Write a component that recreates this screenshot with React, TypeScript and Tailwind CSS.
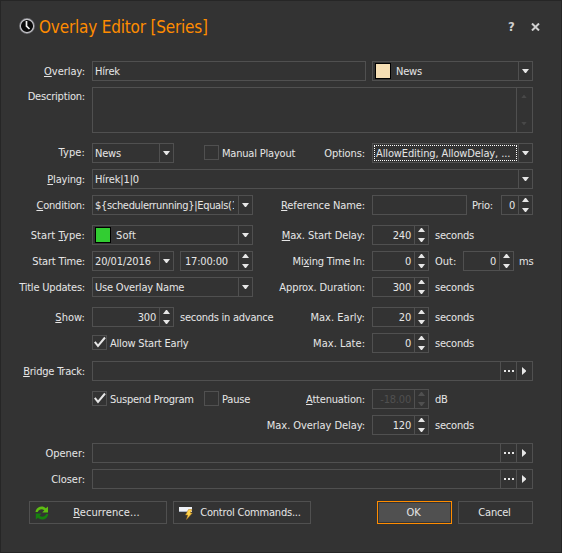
import type { ReactNode } from "react"
import clsx from "clsx"

function Triangle({ dir, className }: { dir: "up" | "down" | "right"; className?: string }) {
  const d = { up: "M0 4h7L4 0H3z", down: "M0 0h7L4 4H3z", right: "M0 0v8l4-3.5v-1z" }[dir]
  const w = dir === "right" ? 4 : 7
  const h = dir === "right" ? 8 : 4
  return (
    <svg width={w} height={h} viewBox={`0 0 ${w} ${h}`} className={clsx("shrink-0 fill-current", className)}>
      <path d={d} />
    </svg>
  )
}

function Label({ children, className }: { children: ReactNode; className?: string }) {
  return <span className={clsx("block shrink-0", className)}>{children}</span>
}

// label columns: left one ends at the first field column, right one at the second
function LeftLabel({ children, className }: { children?: ReactNode; className?: string }) {
  return <Label className={clsx("mr-[7px] w-[84px] text-right", className)}>{children}</Label>
}

function RightLabel({ children, className }: { children: ReactNode; className?: string }) {
  return <Label className={clsx("mr-[7px] ml-auto text-right", className)}>{children}</Label>
}

function Field({ children, className }: { children?: ReactNode; className?: string }) {
  return (
    <div className={clsx("flex shrink-0 overflow-hidden border border-[#505050] leading-[19px]", className)}>
      {children}
    </div>
  )
}

function Combo({
  value,
  swatch,
  focused,
  className,
}: {
  value: string
  swatch?: string
  focused?: boolean
  className?: string
}) {
  return (
    <Field className={clsx("h-5", className)}>
      {swatch && <span className={clsx("mt-px mr-[3px] ml-0.5 size-4 shrink-0 border border-black", swatch)} />}
      <span
        className={clsx(
          "min-w-0 flex-1 overflow-hidden",
          focused ? "m-px border border-dotted border-white pl-px leading-[15px]" : "mr-1 pl-0.5"
        )}
      >
        {value}
      </span>
      <span className="flex w-3.5 shrink-0 items-center justify-center border-l border-[#505050]">
        <Triangle dir="down" />
      </span>
    </Field>
  )
}

function Spin({
  value,
  left,
  disabled,
  className,
}: {
  value: string
  left?: boolean
  disabled?: boolean
  className?: string
}) {
  return (
    <Field className={clsx("h-5", disabled && "text-[#505050]", className)}>
      <span className={clsx("flex-1", left ? "pl-1" : "pr-[3px] text-right")}>{value}</span>
      <span className="flex w-3.5 shrink-0 flex-col items-center justify-between border-l border-[#505050] py-0.5">
        <Triangle dir="up" />
        <Triangle dir="down" />
      </span>
    </Field>
  )
}

function Check({ label, checked, className }: { label: string; checked?: boolean; className?: string }) {
  return (
    <div className={clsx("flex h-5 shrink-0 items-center", className)}>
      <span className="mt-[-1px] size-[15px] border border-[#505050]">
        {checked && (
          <svg width="13" height="13" viewBox="0 0 13 13" className="fill-none stroke-current" strokeWidth="2">
            <path d="M1.8 5.8l3.2 4L12 1.5" />
          </svg>
        )}
      </span>
      <span className="ml-[3px] leading-[19px]">{label}</span>
    </div>
  )
}

function TrackField() {
  return (
    <Field className="h-5 w-[441px] justify-end">
      <span className="flex w-4 items-center justify-center gap-0.5 border-l border-[#505050]">
        <i className="size-[2px] bg-[#e6e6e6]" />
        <i className="size-[2px] bg-[#e6e6e6]" />
        <i className="size-[2px] bg-[#e6e6e6]" />
      </span>
      <span className="flex w-4 items-center border-l border-[#505050] pl-[5px]">
        <Triangle dir="right" />
      </span>
    </Field>
  )
}

function Row({ children, className }: { children: ReactNode; className?: string }) {
  return <div className={clsx("flex h-5 w-[532px] items-start leading-[21px]", className)}>{children}</div>
}

function U({ children }: { children: string }) {
  return <span className="underline decoration-1 underline-offset-1 [text-decoration-skip-ink:none]">{children}</span>
}

function Half({ children }: { children: ReactNode }) {
  return <div className="flex w-[252px] shrink-0">{children}</div>
}

function RightPart({ children }: { children: ReactNode }) {
  return <div className="flex w-[161px] shrink-0">{children}</div>
}

function Button({ children, icon, className }: { children: ReactNode; icon?: ReactNode; className?: string }) {
  return (
    <button className={clsx("flex h-[23px] shrink-0 items-center border leading-5", className)}>
      {icon}
      <span className="flex-1 pt-px pr-0.5 text-center">{children}</span>
    </button>
  )
}

function ClockIcon() {
  return (
    <svg width="16" height="16" viewBox="0 0 16 16" className="shrink-0">
      <circle cx="8" cy="8" r="7.1" fill="#0a0a0a" stroke="#77777b" strokeWidth="1.6" />
      <circle cx="8" cy="8" r="6.6" fill="none" stroke="#c4c4c8" strokeWidth="1.1" />
      <path d="M7.500 3v5.200l3 2.800" fill="none" stroke="#f4f4f4" strokeWidth="1.7" />
    </svg>
  )
}

function RecurrenceIcon() {
  return (
    <svg width="14" height="14" viewBox="0 0 14 14" className="shrink-0">
      <path d="M.5 6C1 2.500 3.500.5 6.700.5c1.700 0 3 .6 4.100 1.700L13 .5v6H7.200l2.100-2.200C7 2.500 4 3 2.700 6z" fill="#5ebd12" />
      <path d="M13.300 8c-.5 3.500-3 5.500-6.200 5.500-1.700 0-3-.6-4.100-1.700L.8 13.500v-6h5.800L4.500 9.700c2.400 1.800 5.400 1.300 6.700-1.700z" fill="#16800f" />
    </svg>
  )
}

function CommandIcon() {
  return (
    <svg width="14" height="14" viewBox="0 0 14 14" className="shrink-0">
      <path d="M0 1h13v5H0z" fill="#eef1f6" />
      <path d="M0 5h8v1H0z" fill="#aab4c4" />
      <path d="M9.500 3.500h3.500L11.300 7h2L7.500 13.500l1.300-4.500H6.500z" fill="#ffd24a" stroke="#a8741c" strokeWidth=".5" />
    </svg>
  )
}

export default function App() {
  return (
    <div className="flex h-[553px] w-[562px] flex-col overflow-hidden border border-[#262626] bg-[#333333] font-['DejaVu_Sans_Condensed','DejaVu_Sans',sans-serif] text-[11px] tracking-[-0.2px] whitespace-pre text-[#e6e6e6] [font-stretch:condensed]">
      <header className="flex h-[60px] shrink-0 items-start pt-[17px] pl-[18px]">
        <ClockIcon />
        <h1 className="mt-[-3px] ml-1 text-[17px] leading-6 tracking-[-0.2px] text-[#ff8c00]">Overlay Editor [Series]</h1>
        <div className="ml-auto flex pt-0.5 pr-[21px]">
          <span className="w-[23px] text-[13px] leading-[14px] font-bold text-[#d0d0d0]">?</span>
          <svg width="9" height="8" viewBox="0 0 9 8" className="mt-[3px] stroke-[#d0d0d0]" strokeWidth="2">
            <path d="M1 .5l7 7M8 .5l-7 7" />
          </svg>
        </div>
      </header>

      <Row>
        <LeftLabel className="tracking-normal"><U>O</U>verlay:</LeftLabel>
        <Field className="h-5 w-[274px] pl-0.5">Hírek</Field>
        <Combo value="News" swatch="bg-[#f5deb3]" className="ml-1.5 w-[161px]" />
      </Row>
      <div className="mt-1.5 flex h-[46px] w-[532px]">
        <LeftLabel className="leading-[19px]">Description:</LeftLabel>
        <Field className="h-[46px] w-[441px] justify-end">
          <span className="flex w-4 flex-col items-center justify-between border-l border-[#505050] py-[7px] pr-[5px] pl-1 text-[#484848]">
            <Triangle dir="up" className="h-[3px] w-[6px]" />
            <Triangle dir="down" className="h-[3px] w-[6px]" />
          </span>
        </Field>
      </div>
      <Row className="mt-2.5">
        <LeftLabel className="leading-[19px] tracking-[0.1px]">Type:</LeftLabel>
        <Combo value="News" className="w-[82px]" />
        <Check label="Manual Playout" className="ml-[30px]" />
        <RightLabel className="tracking-[-0.1px]">Options:</RightLabel>
        <Combo value="AllowEditing, AllowDelay, ..." focused className="w-[161px] tracking-[-0.12px]" />
      </Row>
      <Row className="mt-1.5">
        <LeftLabel><U>P</U>laying:</LeftLabel>
        <Combo value="Hírek|1|0" className="w-[441px] tracking-[-0.12px]" />
      </Row>
      <Row className="mt-1.5">
        <Half>
          <LeftLabel><U>C</U>ondition:</LeftLabel>
          <Combo value="${schedulerrunning}|Equals(1" className="w-[161px] tracking-[-0.32px]" />
        </Half>
        <RightLabel className="tracking-[-0.1px]"><U>R</U>eference Name:</RightLabel>
        <RightPart>
          <Field className="h-5 w-[95px]" />
          <Label className="ml-[5px]">Prio:</Label>
          <Spin value="0" className="ml-auto w-8" />
        </RightPart>
      </Row>

      <Row className="mt-2.5">
        <Half>
          <LeftLabel className="tracking-[0.1px]">Start <U>T</U>ype:</LeftLabel>
          <Combo value="Soft" swatch="bg-[#32cd32]" className="w-[161px] tracking-[0.1px]" />
        </Half>
        <RightLabel className="tracking-[-0.1px]"><U>M</U>ax. Start Delay:</RightLabel>
        <RightPart>
          <Spin value="240" className="w-[57px]" />
          <Label className="ml-1.5">seconds</Label>
        </RightPart>
      </Row>
      <Row className="mt-1.5">
        <Half>
          <LeftLabel>Start Time:</LeftLabel>
          <Combo value="20/01/2016" className="w-[82px] tracking-[-0.12px]" />
          <Spin value="17:00:00" left className="ml-1.5 w-[73px]" />
        </Half>
        <RightLabel>Mi<U>x</U>ing Time In:</RightLabel>
        <RightPart>
          <Spin value="0" className="w-[57px]" />
          <Label className="ml-1.5 w-7 tracking-normal">Out:</Label>
          <Spin value="0" className="w-[51px]" />
          <Label className="ml-[5px]">ms</Label>
        </RightPart>
      </Row>
      <Row className="mt-1.5">
        <Half>
          <LeftLabel>Title Updates:</LeftLabel>
          <Combo value="Use Overlay Name" className="w-[161px]" />
        </Half>
        <RightLabel className="tracking-[-0.1px]">Approx. Duration:</RightLabel>
        <RightPart>
          <Spin value="300" className="w-[57px]" />
          <Label className="ml-1.5">seconds</Label>
        </RightPart>
      </Row>

      <Row className="mt-2.5">
        <LeftLabel className="tracking-[0.05px]"><U>S</U>how:</LeftLabel>
        <Spin value="300" className="w-[82px]" />
        <Label className="ml-1.5 tracking-[-0.25px]">seconds in advance</Label>
        <RightLabel className="tracking-[0.03px]">Max. Early:</RightLabel>
        <RightPart>
          <Spin value="20" className="w-[57px]" />
          <Label className="ml-1.5">seconds</Label>
        </RightPart>
      </Row>
      <Row className="mt-1.5">
        <LeftLabel />
        <Check label="Allow Start Early" checked />
        <RightLabel className="tracking-[0.03px]">Max. Late:</RightLabel>
        <RightPart>
          <Spin value="0" className="w-[57px]" />
          <Label className="ml-1.5">seconds</Label>
        </RightPart>
      </Row>

      <Row className="mt-2">
        <LeftLabel><U>B</U>ridge Track:</LeftLabel>
        <TrackField />
      </Row>
      <Row className="mt-2">
        <LeftLabel />
        <Check label="Suspend Program" checked className="w-28 tracking-[-0.25px]" />
        <Check label="Pause" />
        <RightLabel><U>A</U>ttenuation:</RightLabel>
        <RightPart>
          <Spin value="-18.00" disabled className="w-[57px]" />
          <Label className="ml-1.5">dB</Label>
        </RightPart>
      </Row>
      <Row className="mt-1.5">
        <RightLabel className="tracking-[-0.06px]">Max. Overlay Delay:</RightLabel>
        <RightPart>
          <Spin value="120" className="w-[57px]" />
          <Label className="ml-1.5">seconds</Label>
        </RightPart>
      </Row>
      <Row className="mt-2">
        <LeftLabel className="tracking-[-0.05px]">Opener:</LeftLabel>
        <TrackField />
      </Row>
      <Row className="mt-1.5">
        <LeftLabel className="tracking-[-0.05px]">Closer:</LeftLabel>
        <TrackField />
      </Row>

      <footer className="mt-3 flex w-[532px] gap-1.5 pl-7">
        <Button icon={<RecurrenceIcon />} className="w-[138px] border-[#505050] pl-[5px] tracking-[0.1px]">
          <U>R</U>ecurrence...
        </Button>
        <Button icon={<CommandIcon />} className="w-[138px] border-[#505050] pl-[5px]">
          Control Commands...
        </Button>
        <Button className="ml-auto w-[75px] border-[#ff8c00] bg-[#505050] shadow-[inset_0_0_0_1px_#333333]">OK</Button>
        <Button className="w-[75px] border-[#505050]">Cancel</Button>
      </footer>
    </div>
  )
}
